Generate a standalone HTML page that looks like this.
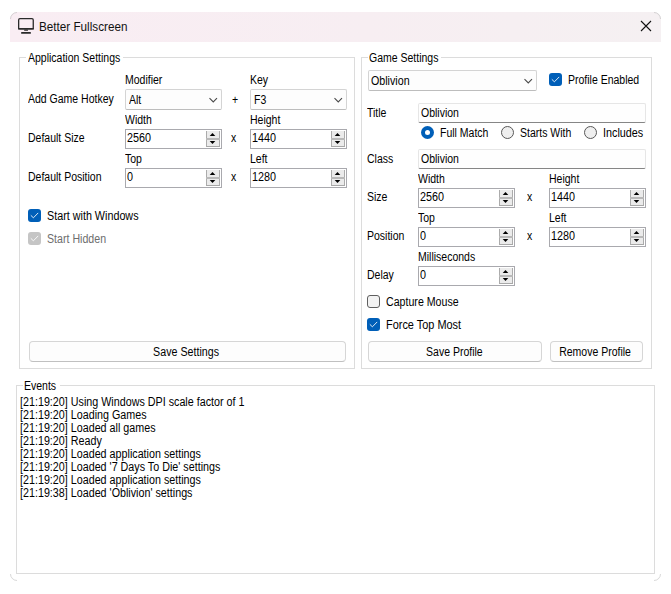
<!DOCTYPE html>
<html><head><meta charset="utf-8">
<style>
*{box-sizing:border-box;margin:0;padding:0}
html,body{width:671px;height:594px;background:#fff;overflow:hidden}
body{position:relative;font-family:"Liberation Sans",sans-serif;font-size:12px;color:#000}
.a{position:absolute}
.l{position:absolute;font-size:12px;line-height:13px;white-space:nowrap;color:#000;transform:scaleX(0.875);transform-origin:0 0}
.lc{position:absolute;font-size:12px;line-height:13px;white-space:nowrap;color:#000;text-align:center}
.lc span{display:inline-block;transform:scaleX(0.875)}
.win{position:absolute;left:10px;top:12px;width:651px;height:569px;border-radius:7px;background:#fff;overflow:hidden}
.tb{position:absolute;left:0;top:0;width:651px;height:30px;background:linear-gradient(to right,#f9edf3,#f7eef2 55%,#f5f0f2)}
.gb{position:absolute;border:1px solid #dcdcdc}
.lg{position:absolute;background:#fff;left:0;top:0}
.cb{position:absolute;border:1px solid #d4d4d4;border-bottom-color:#bdbdbd;border-radius:2px;background:#fdfdfd}
.nud{position:absolute;border:1px solid #a9a9ae;background:#fff}
.tx{position:absolute;border:1px solid #e6e6e6;border-bottom:1px solid #868686;border-radius:2px;background:#fefefe}
.btn{position:absolute;border:1px solid #d6d6d6;border-bottom-color:#c0c0c0;border-radius:4px;background:#fdfdfd}
.chk{position:absolute;width:13px;height:13px;border-radius:3px;background:#005fb8}
.unchk{position:absolute;width:13px;height:13px;border-radius:3px;background:#f3f3f3;border:1px solid #5f5f5f}
.rad{position:absolute;width:13px;height:13px;border-radius:50%;background:#005fb8}
.rad::after{content:"";position:absolute;left:4px;top:4px;width:5px;height:5px;border-radius:50%;background:#fff}
.unrad{position:absolute;width:13px;height:13px;border-radius:50%;background:#efefef;border:1px solid #585858}
</style></head><body>
<div class="win"><div class="tb"></div></div>
<svg class="a" style="left:0;top:0" width="671" height="594"><g fill="none" stroke="#b8b8b8" stroke-width="1" opacity="0.55"><path d="M10.5,19 A6.5,6.5 0 0 1 17,12.5"/><path d="M654,12.5 A6.5,6.5 0 0 1 660.5,19"/><path d="M10.5,574 A6.5,6.5 0 0 0 17,580.5"/><path d="M660.5,574 A6.5,6.5 0 0 1 654,580.5"/></g></svg>
<svg class="a" style="left:15px;top:15px" width="22" height="22" viewBox="0 0 22 22"><rect x="3.65" y="3.65" width="14.6" height="10.3" rx="1.3" fill="none" stroke="#2a2a2a" stroke-width="1.3"/><rect x="3" y="13" width="16" height="1.6" rx="0.6" fill="#2a2a2a"/><rect x="9.1" y="14.4" width="3.9" height="1.4" rx="0.5" fill="#2a2a2a"/><rect x="6.1" y="17" width="9.8" height="1.7" rx="0.5" fill="#2a2a2a"/></svg>
<div class="l" style="left:39px;top:21px;transform:scaleX(0.975);color:#111">Better Fullscreen</div><svg class="a" style="left:640px;top:20px" width="12" height="12" viewBox="0 0 12 12"><path d="M1 1L11 11M11 1L1 11" stroke="#111" stroke-width="1.1"/></svg>
<div class="gb" style="left:19px;top:57px;width:336px;height:312px"></div><div class="a" style="left:26px;top:56px;width:97px;height:3px;background:#fff"></div><div class="l" style="left:28px;top:52px">Application Settings</div>
<div class="l" style="left:125px;top:74px">Modifier</div><div class="l" style="left:250px;top:74px">Key</div><div class="l" style="left:28px;top:93px">Add Game Hotkey</div><div class="cb" style="left:125px;top:89px;width:97px;height:21px"><svg class="a" style="left:83px;top:7px" width="10" height="6" viewBox="0 0 10 6"><path d="M0.5 1.1L4.25 4.85L8 1.1" fill="none" stroke="#4a4a4a" stroke-width="1.1"/></svg></div><div class="l" style="left:129px;top:94px">Alt</div><div class="l" style="left:232px;top:94px">+</div><div class="cb" style="left:250px;top:89px;width:97px;height:21px"><svg class="a" style="left:83px;top:7px" width="10" height="6" viewBox="0 0 10 6"><path d="M0.5 1.1L4.25 4.85L8 1.1" fill="none" stroke="#4a4a4a" stroke-width="1.1"/></svg></div><div class="l" style="left:254px;top:94px">F3</div>
<div class="l" style="left:125px;top:114px">Width</div><div class="l" style="left:250px;top:114px">Height</div><div class="l" style="left:28px;top:132px">Default Size</div><div class="nud" style="left:125px;top:129px;width:97px;height:20px"><svg class="a" style="right:1px;top:1px" width="14" height="16" viewBox="0 0 14 16"><rect x="0" y="0" width="14" height="16" fill="#ebebeb"/><rect x="0" y="0" width="1" height="16" fill="#ababab"/><rect x="13" y="0" width="1" height="16" fill="#ababab"/><rect x="0" y="15" width="14" height="1" fill="#a8a8a8"/><rect x="0" y="7" width="14" height="2" fill="#b9b9b9"/><polygon points="3.7,5 9.3,5 6.5,2" fill="#000"/><polygon points="3.7,10 9.3,10 6.5,13" fill="#000"/></svg></div><div class="l" style="left:127px;top:132px;transform:scaleX(0.9)">2560</div><div class="l" style="left:231px;top:132px">x</div><div class="nud" style="left:250px;top:129px;width:97px;height:20px"><svg class="a" style="right:1px;top:1px" width="14" height="16" viewBox="0 0 14 16"><rect x="0" y="0" width="14" height="16" fill="#ebebeb"/><rect x="0" y="0" width="1" height="16" fill="#ababab"/><rect x="13" y="0" width="1" height="16" fill="#ababab"/><rect x="0" y="15" width="14" height="1" fill="#a8a8a8"/><rect x="0" y="7" width="14" height="2" fill="#b9b9b9"/><polygon points="3.7,5 9.3,5 6.5,2" fill="#000"/><polygon points="3.7,10 9.3,10 6.5,13" fill="#000"/></svg></div><div class="l" style="left:252px;top:132px;transform:scaleX(0.9)">1440</div>
<div class="l" style="left:125px;top:153px">Top</div><div class="l" style="left:250px;top:153px">Left</div><div class="l" style="left:28px;top:171px">Default Position</div><div class="nud" style="left:125px;top:168px;width:97px;height:20px"><svg class="a" style="right:1px;top:1px" width="14" height="16" viewBox="0 0 14 16"><rect x="0" y="0" width="14" height="16" fill="#ebebeb"/><rect x="0" y="0" width="1" height="16" fill="#ababab"/><rect x="13" y="0" width="1" height="16" fill="#ababab"/><rect x="0" y="15" width="14" height="1" fill="#a8a8a8"/><rect x="0" y="7" width="14" height="2" fill="#b9b9b9"/><polygon points="3.7,5 9.3,5 6.5,2" fill="#000"/><polygon points="3.7,10 9.3,10 6.5,13" fill="#000"/></svg></div><div class="l" style="left:127px;top:171px;transform:scaleX(0.9)">0</div><div class="l" style="left:231px;top:171px">x</div><div class="nud" style="left:250px;top:168px;width:97px;height:20px"><svg class="a" style="right:1px;top:1px" width="14" height="16" viewBox="0 0 14 16"><rect x="0" y="0" width="14" height="16" fill="#ebebeb"/><rect x="0" y="0" width="1" height="16" fill="#ababab"/><rect x="13" y="0" width="1" height="16" fill="#ababab"/><rect x="0" y="15" width="14" height="1" fill="#a8a8a8"/><rect x="0" y="7" width="14" height="2" fill="#b9b9b9"/><polygon points="3.7,5 9.3,5 6.5,2" fill="#000"/><polygon points="3.7,10 9.3,10 6.5,13" fill="#000"/></svg></div><div class="l" style="left:252px;top:171px;transform:scaleX(0.9)">1280</div>
<div class="chk" style="left:28px;top:209px"><svg class="a" style="left:0;top:0" width="13" height="13" viewBox="0 0 13 13"><path d="M3.1 6.6L5.4 8.8L9.9 4.2" fill="none" stroke="#fff" stroke-width="0.95" stroke-linecap="round" stroke-linejoin="round" opacity="0.9"/></svg></div><div class="l" style="left:47px;top:210px;transform:scaleX(0.897)">Start with Windows</div><div class="chk" style="left:28px;top:232px;background:#c5c5c5"><svg class="a" style="left:0;top:0" width="13" height="13" viewBox="0 0 13 13"><path d="M3.1 6.6L5.4 8.8L9.9 4.2" fill="none" stroke="#fff" stroke-width="0.95" stroke-linecap="round" stroke-linejoin="round" opacity="0.9"/></svg></div><div class="l" style="left:47px;top:233px;color:#6d6d6d;transform:scaleX(0.885)">Start Hidden</div>
<div class="btn" style="left:29px;top:341px;width:317px;height:21px"></div><div class="lc" style="left:28px;width:317px;top:346px"><span style="transform:scaleX(0.89)">Save Settings</span></div>
<div class="gb" style="left:361px;top:57px;width:291px;height:312px"></div><div class="a" style="left:368px;top:56px;width:73px;height:3px;background:#fff"></div><div class="l" style="left:369px;top:52px">Game Settings</div>
<div class="cb" style="left:368px;top:70px;width:169px;height:21px"><svg class="a" style="left:155px;top:7px" width="10" height="6" viewBox="0 0 10 6"><path d="M0.5 1.1L4.25 4.85L8 1.1" fill="none" stroke="#4a4a4a" stroke-width="1.1"/></svg></div><div class="l" style="left:371px;top:75px;transform:scaleX(0.89)">Oblivion</div><div class="chk" style="left:549px;top:73px"><svg class="a" style="left:0;top:0" width="13" height="13" viewBox="0 0 13 13"><path d="M3.1 6.6L5.4 8.8L9.9 4.2" fill="none" stroke="#fff" stroke-width="0.95" stroke-linecap="round" stroke-linejoin="round" opacity="0.9"/></svg></div><div class="l" style="left:568px;top:74px">Profile Enabled</div>
<div class="l" style="left:367px;top:107px">Title</div><div class="tx" style="left:418px;top:103px;width:228px;height:20px"></div><div class="l" style="left:421px;top:107px">Oblivion</div>
<div class="rad" style="left:421px;top:126px"></div><div class="l" style="left:440px;top:127px">Full Match</div><div class="unrad" style="left:501px;top:126px"></div><div class="l" style="left:520px;top:127px">Starts With</div><div class="unrad" style="left:584px;top:126px"></div><div class="l" style="left:603px;top:127px;transform:scaleX(0.9)">Includes</div>
<div class="l" style="left:367px;top:153px">Class</div><div class="tx" style="left:418px;top:149px;width:228px;height:20px"></div><div class="l" style="left:421px;top:153px">Oblivion</div>
<div class="l" style="left:418px;top:173px">Width</div><div class="l" style="left:549px;top:173px">Height</div><div class="l" style="left:367px;top:191px">Size</div><div class="nud" style="left:418px;top:188px;width:97px;height:20px"><svg class="a" style="right:1px;top:1px" width="14" height="16" viewBox="0 0 14 16"><rect x="0" y="0" width="14" height="16" fill="#ebebeb"/><rect x="0" y="0" width="1" height="16" fill="#ababab"/><rect x="13" y="0" width="1" height="16" fill="#ababab"/><rect x="0" y="15" width="14" height="1" fill="#a8a8a8"/><rect x="0" y="7" width="14" height="2" fill="#b9b9b9"/><polygon points="3.7,5 9.3,5 6.5,2" fill="#000"/><polygon points="3.7,10 9.3,10 6.5,13" fill="#000"/></svg></div><div class="l" style="left:420px;top:191px;transform:scaleX(0.9)">2560</div><div class="l" style="left:527px;top:191px">x</div><div class="nud" style="left:549px;top:188px;width:97px;height:20px"><svg class="a" style="right:1px;top:1px" width="14" height="16" viewBox="0 0 14 16"><rect x="0" y="0" width="14" height="16" fill="#ebebeb"/><rect x="0" y="0" width="1" height="16" fill="#ababab"/><rect x="13" y="0" width="1" height="16" fill="#ababab"/><rect x="0" y="15" width="14" height="1" fill="#a8a8a8"/><rect x="0" y="7" width="14" height="2" fill="#b9b9b9"/><polygon points="3.7,5 9.3,5 6.5,2" fill="#000"/><polygon points="3.7,10 9.3,10 6.5,13" fill="#000"/></svg></div><div class="l" style="left:551px;top:191px;transform:scaleX(0.9)">1440</div>
<div class="l" style="left:418px;top:212px">Top</div><div class="l" style="left:549px;top:212px">Left</div><div class="l" style="left:367px;top:230px">Position</div><div class="nud" style="left:418px;top:227px;width:97px;height:20px"><svg class="a" style="right:1px;top:1px" width="14" height="16" viewBox="0 0 14 16"><rect x="0" y="0" width="14" height="16" fill="#ebebeb"/><rect x="0" y="0" width="1" height="16" fill="#ababab"/><rect x="13" y="0" width="1" height="16" fill="#ababab"/><rect x="0" y="15" width="14" height="1" fill="#a8a8a8"/><rect x="0" y="7" width="14" height="2" fill="#b9b9b9"/><polygon points="3.7,5 9.3,5 6.5,2" fill="#000"/><polygon points="3.7,10 9.3,10 6.5,13" fill="#000"/></svg></div><div class="l" style="left:420px;top:230px;transform:scaleX(0.9)">0</div><div class="l" style="left:527px;top:230px">x</div><div class="nud" style="left:549px;top:227px;width:97px;height:20px"><svg class="a" style="right:1px;top:1px" width="14" height="16" viewBox="0 0 14 16"><rect x="0" y="0" width="14" height="16" fill="#ebebeb"/><rect x="0" y="0" width="1" height="16" fill="#ababab"/><rect x="13" y="0" width="1" height="16" fill="#ababab"/><rect x="0" y="15" width="14" height="1" fill="#a8a8a8"/><rect x="0" y="7" width="14" height="2" fill="#b9b9b9"/><polygon points="3.7,5 9.3,5 6.5,2" fill="#000"/><polygon points="3.7,10 9.3,10 6.5,13" fill="#000"/></svg></div><div class="l" style="left:551px;top:230px;transform:scaleX(0.9)">1280</div>
<div class="l" style="left:418px;top:251px">Milliseconds</div><div class="l" style="left:367px;top:269px">Delay</div><div class="nud" style="left:418px;top:266px;width:97px;height:20px"><svg class="a" style="right:1px;top:1px" width="14" height="16" viewBox="0 0 14 16"><rect x="0" y="0" width="14" height="16" fill="#ebebeb"/><rect x="0" y="0" width="1" height="16" fill="#ababab"/><rect x="13" y="0" width="1" height="16" fill="#ababab"/><rect x="0" y="15" width="14" height="1" fill="#a8a8a8"/><rect x="0" y="7" width="14" height="2" fill="#b9b9b9"/><polygon points="3.7,5 9.3,5 6.5,2" fill="#000"/><polygon points="3.7,10 9.3,10 6.5,13" fill="#000"/></svg></div><div class="l" style="left:420px;top:269px;transform:scaleX(0.9)">0</div>
<div class="unchk" style="left:367px;top:295px"></div><div class="l" style="left:386px;top:296px;transform:scaleX(0.885)">Capture Mouse</div><div class="chk" style="left:367px;top:318px"><svg class="a" style="left:0;top:0" width="13" height="13" viewBox="0 0 13 13"><path d="M3.1 6.6L5.4 8.8L9.9 4.2" fill="none" stroke="#fff" stroke-width="0.95" stroke-linecap="round" stroke-linejoin="round" opacity="0.9"/></svg></div><div class="l" style="left:386px;top:319px;transform:scaleX(0.91)">Force Top Most</div>
<div class="btn" style="left:368px;top:341px;width:174px;height:21px"></div><div class="lc" style="left:367px;width:174px;top:346px"><span>Save Profile</span></div><div class="btn" style="left:550px;top:341px;width:93px;height:21px"></div><div class="lc" style="left:549px;width:93px;top:346px"><span>Remove Profile</span></div>
<div class="gb" style="left:16px;top:385px;width:639px;height:189px"></div><div class="a" style="left:23px;top:384px;width:37px;height:3px;background:#fff"></div><div class="l" style="left:24px;top:380px">Events</div>
<div class="l" style="left:20px;top:396px;transform:scaleX(0.895)">[21:19:20] Using Windows DPI scale factor of 1</div>
<div class="l" style="left:20px;top:409px;transform:scaleX(0.895)">[21:19:20] Loading Games</div>
<div class="l" style="left:20px;top:422px;transform:scaleX(0.895)">[21:19:20] Loaded all games</div>
<div class="l" style="left:20px;top:435px;transform:scaleX(0.895)">[21:19:20] Ready</div>
<div class="l" style="left:20px;top:448px;transform:scaleX(0.895)">[21:19:20] Loaded application settings</div>
<div class="l" style="left:20px;top:461px;transform:scaleX(0.895)">[21:19:20] Loaded '7 Days To Die' settings</div>
<div class="l" style="left:20px;top:474px;transform:scaleX(0.895)">[21:19:20] Loaded application settings</div>
<div class="l" style="left:20px;top:487px;transform:scaleX(0.895)">[21:19:38] Loaded 'Oblivion' settings</div>
</body></html>
